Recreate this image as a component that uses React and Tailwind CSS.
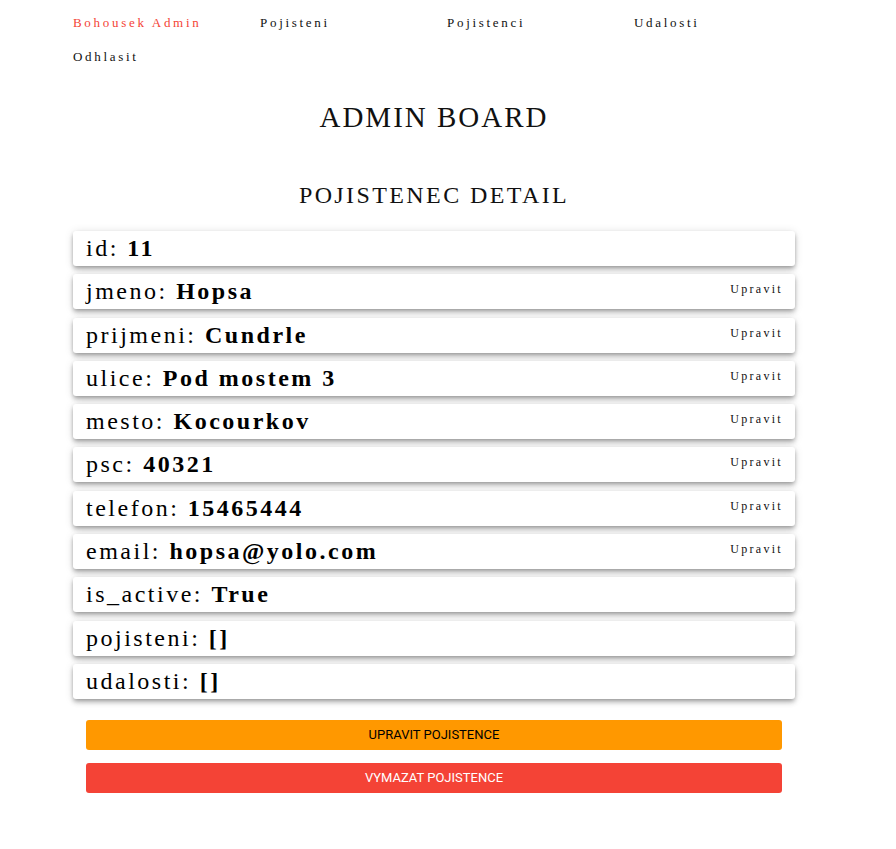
import React from 'react';

const fields = [
  { label: 'id', value: '11', editable: false },
  { label: 'jmeno', value: 'Hopsa', editable: true },
  { label: 'prijmeni', value: 'Cundrle', editable: true },
  { label: 'ulice', value: 'Pod mostem 3', editable: true },
  { label: 'mesto', value: 'Kocourkov', editable: true },
  { label: 'psc', value: '40321', editable: true },
  { label: 'telefon', value: '15465444', editable: true },
  { label: 'email', value: 'hopsa@yolo.com', editable: true },
  { label: 'is_active', value: 'True', editable: false },
  { label: 'pojisteni', value: '[]', editable: false },
  { label: 'udalosti', value: '[]', editable: false },
];

const navItems = ['Pojisteni', 'Pojistenci', 'Udalosti', 'Odhlasit'];

const App = () => {
  return (
    <div className="min-h-[849px] bg-white text-black font-['Liberation_Serif',serif]">
      {/* Nav */}
      <nav className="ml-[73px] w-[748px] flex flex-wrap pt-[7px]">
        <a className="w-[187px] h-[34px] leading-[32px] text-[13px] tracking-[2.7px] text-[#f44336]">
          Bohousek Admin
        </a>
        {navItems.map((item) => (
          <a key={item} className="w-[187px] h-[34px] leading-[32px] text-[13px] tracking-[2.7px] text-[#111]">
            {item}
          </a>
        ))}
      </nav>

      <div className="ml-[73px] w-[722px]">
        <h1 className="text-center text-[29px] tracking-[2px] mt-[22px] leading-[40px] text-[#111]">ADMIN BOARD</h1>
        <h2 className="text-center text-[24px] tracking-[2.4px] mt-[42px] leading-[32px] text-[#111]">POJISTENEC DETAIL</h2>

        {/* Fields */}
        <div className="mt-[20px] flex flex-col gap-[8.3px]">
          {fields.map((f) => (
            <div
              key={f.label}
              className="h-[35px] bg-white rounded-[3px] shadow-[0_4px_5px_0_rgba(0,0,0,0.14),0_1px_10px_0_rgba(0,0,0,0.12),0_2px_4px_-1px_rgba(0,0,0,0.3)] pl-[13px] pr-[12px] flex items-center justify-between"
            >
              <span className="text-[24px] tracking-[2.5px] leading-[35px]">
                {f.label}: <b className="font-bold">{f.value}</b>
              </span>
              {f.editable && (
                <a className="self-start mt-[6px] text-[12px] tracking-[2.3px] text-[#111]">Upravit</a>
              )}
            </div>
          ))}
        </div>

        {/* Buttons */}
        <div className="px-[13px] mt-[21px] flex flex-col gap-[13px] font-['Roboto',sans-serif]">
          <button className="h-[30px] w-full bg-[#ff9800] rounded-[3px] text-[13px] text-black">
            UPRAVIT POJISTENCE
          </button>
          <button className="h-[30px] w-full bg-[#f44336] rounded-[3px] text-[13px] text-white">
            VYMAZAT POJISTENCE
          </button>
        </div>
      </div>
    </div>
  );
};

export default App;
